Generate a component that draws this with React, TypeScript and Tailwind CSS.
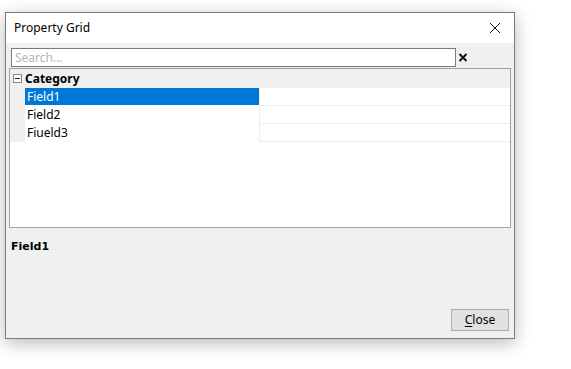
import React from "react";

const rows = ["Field1", "Field2", "Fiueld3"];

const App = () => {
  return (
    <div className="w-[571px] h-[369px] bg-white pt-[12px] pl-[5px]" style={{ fontFamily: '"Noto Sans", "Open Sans", sans-serif' }}>
      <div className="w-[510px] h-[327px] border border-[#7a7a7a] bg-[#f0f0f0] flex flex-col shadow-[0_4px_16px_rgba(0,0,0,0.28)]">
        {/* title bar */}
        <div className="h-[30px] bg-white flex items-center justify-between shrink-0">
          <span className="pl-[8px] text-[12px] text-black leading-none">Property Grid</span>
          <svg width="46" height="30" viewBox="0 0 46 30" className="shrink-0">
            <path d="M22 10 L32 20 M32 10 L22 20" stroke="#111" strokeWidth="1" fill="none" />
          </svg>
        </div>

        {/* search */}
        <div className="flex items-center pl-[5px] pt-[5px] shrink-0">
          <div className="w-[445px] h-[19px] border border-[#7a7a7a] bg-white flex items-center px-[3px]">
            <span className="text-[12px] text-[#b4b4b4] leading-none">Search...</span>
          </div>
          <svg width="14" height="19" viewBox="0 0 14 19">
            <path d="M3.5 6 L10.5 13 M10.5 6 L3.5 13" stroke="#111" strokeWidth="2" fill="none" />
          </svg>
        </div>

        {/* grid */}
        <div className="mx-[3px] mt-[1px] h-[160px] border border-[#a0a0a0] bg-white shrink-0 flex flex-col">
          <div className="h-[19px] bg-[#f0f0f0] flex items-center">
            <div className="w-[15px] flex justify-center items-center">
              <svg width="9" height="9" viewBox="0 0 9 9">
                <rect x="0.5" y="0.5" width="8" height="8" fill="#fff" stroke="#8a8a8a" />
                <path d="M2 4.5 H7" stroke="#222" strokeWidth="1" />
              </svg>
            </div>
            <span className="text-[12px] font-bold text-black leading-none">Category</span>
          </div>
          {rows.map((r, i) => (
            <div key={r} className="h-[18px] flex">
              <div className="w-[15px] bg-[#f0f0f0] shrink-0" />
              <div
                className={
                  i === 0
                    ? "w-[234px] h-[17px] bg-[#0078d7] text-white flex items-center pl-[2px] text-[12px] leading-none"
                    : "w-[234px] h-[17px] text-black flex items-center pl-[2px] text-[12px] leading-none"
                }
              >
                {r}
              </div>
              <div className="flex-1 flex flex-col">
                <div className="flex-1 flex">
                  <div className="w-[1px] bg-[#ececec]" />
                  <div className="flex-1" />
                </div>
                <div className="h-[1px] bg-[#ececec]" />
              </div>
            </div>
          ))}
        </div>

        {/* description */}
        <div className="pl-[5px] pt-[8px] flex-1 leading-none">
          <span className="font-bold text-black leading-none" style={{ fontFamily: '"DejaVu Sans", sans-serif', fontSize: "11px" }}>
            Field1
          </span>
        </div>

        {/* footer */}
        <div className="flex justify-end pr-[5px] pb-[7px] shrink-0">
          <button className="w-[58px] h-[22px] bg-[#e1e1e1] border border-[#adadad] text-[12px] text-black leading-none">
            <span className="underline underline-offset-2">C</span>lose
          </button>
        </div>
      </div>
    </div>
  );
};

export default App;
